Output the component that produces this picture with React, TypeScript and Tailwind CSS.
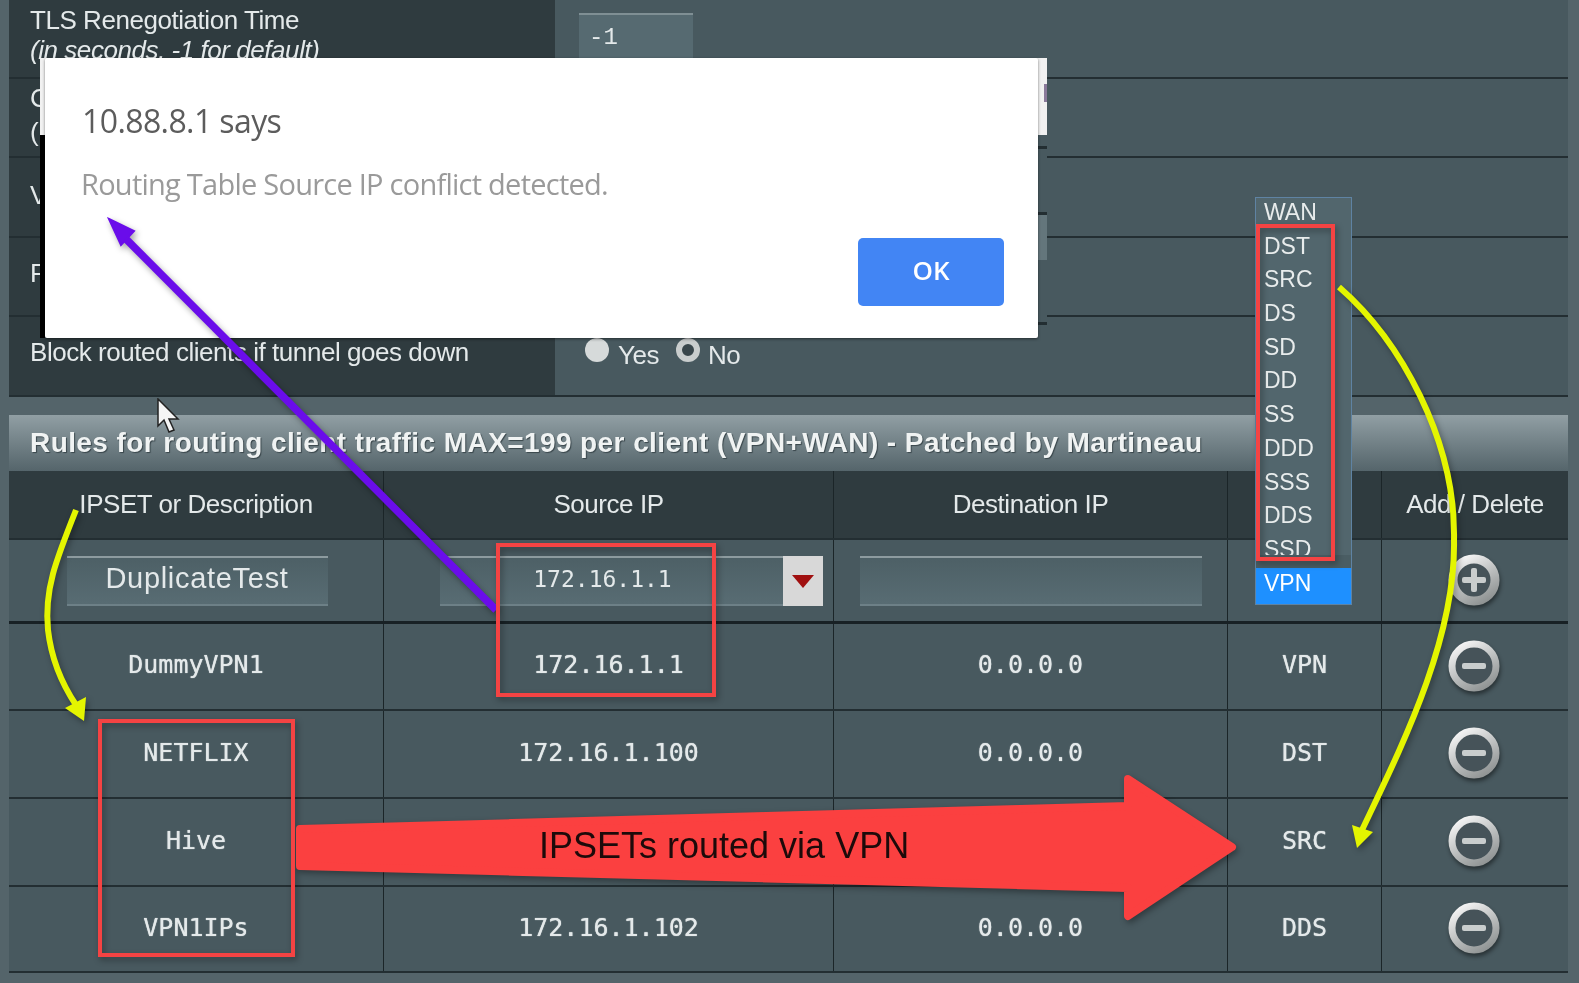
const columns = "grid grid-cols-[375px_450px_394px_154px_186px]";
const cell = "flex items-center justify-center border-r border-[#1b2528] last:border-r-0";
const mono = "font-['DejaVu_Sans_Mono',monospace] text-[25px] text-[#e4e9ea] [text-shadow:0_0_1px_#e4e9ea]";

const rules = [
  { name: "DummyVPN1", source: "172.16.1.1", dest: "0.0.0.0", iface: "VPN", height: "h-[87px]" },
  { name: "NETFLIX", source: "172.16.1.100", dest: "0.0.0.0", iface: "DST", height: "h-[88px]" },
  { name: "Hive", source: "", dest: "", iface: "SRC", height: "h-[88px]" },
  { name: "VPN1IPs", source: "172.16.1.102", dest: "0.0.0.0", iface: "DDS", height: "h-[86px]" },
];

const ifaceOptions = ["WAN", "DST", "SRC", "DS", "SD", "DD", "SS", "DDD", "SSS", "DDS", "SSD"];

function RoundButton({ plus = false }: { plus?: boolean }) {
  return (
    <svg width="56" height="56" viewBox="0 0 56 56" className="mb-[2px] mr-[2px] drop-shadow-[1px_3px_2px_rgba(0,0,0,0.45)]">
      <defs>
        <linearGradient id="ring" x1="0.2" y1="0" x2="0.8" y2="1">
          <stop offset="0" stopColor="#f4f4f4" />
          <stop offset="0.55" stopColor="#b9bcbc" />
          <stop offset="1" stopColor="#8f9393" />
        </linearGradient>
      </defs>
      <circle cx="28" cy="28" r={plus ? 21 : 22} fill="#465359" stroke="url(#ring)" strokeWidth={plus ? 9 : 7} />
      <rect x="16" y="25" width="24" height="6" rx="2" fill="#c9cdcd" />
      {plus && <rect x="25" y="16" width="6" height="24" rx="2" fill="#c9cdcd" />}
    </svg>
  );
}

function TextBox({ value, className }: { value: string; className: string }) {
  return (
    <input
      readOnly
      value={value}
      className={`h-[50px] border-t-2 border-b-2 border-t-[#8d9b9f] border-b-[#6d8087] bg-gradient-to-b from-[#4d6066] to-[#586c73] text-[#e4e9ea] outline-none ${className}`}
    />
  );
}

function SettingRow({ height, label, children }: { height: string; label?: React.ReactNode; children?: React.ReactNode }) {
  return (
    <div className={`flex ${height} border-b-2 border-[#232e32]`}>
      <div className="w-[546px] overflow-hidden bg-[#2f3b3f] pl-[21px] text-[26px] leading-[30px] tracking-[-0.45px] text-[#e4e9ea]">{label}</div>
      <div className="flex-1 bg-[#48595f]">{children}</div>
    </div>
  );
}

export default function App() {
  return (
    <div className="relative h-[983px] w-[1579px] overflow-hidden bg-[#54646a] font-['Liberation_Sans',sans-serif] blur-[0.6px]">
      <div className="ml-[9px] mr-[11px]">
        {/* OpenVPN settings, scrolled */}
        <SettingRow
          height="h-[79px]"
          label={
            <div className="pt-[5px]">
              <div>TLS Renegotiation Time</div>
              <div className="italic">(in seconds, -1 for default)</div>
            </div>
          }
        >
          <div className="ml-[24px] mt-[13px] h-[64px] w-[114px] border-t-2 border-[#7f8f94] bg-[#566a71] pl-[10px] pt-[5px] font-['Liberation_Mono',monospace] text-[24px] text-[#e4e9ea]">
            -1
          </div>
        </SettingRow>
        <SettingRow
          height="h-[79px]"
          label={
            <div className="pt-[2px] leading-[34px]">
              <div>C</div>
              <div>(</div>
            </div>
          }
        />
        <SettingRow height="h-[80px]" label={<div className="pt-[22px]">V</div>} />
        <SettingRow height="h-[79px]" label={<div className="pt-[20px]">F</div>} />
        <SettingRow height="h-[80px]" label={<div className="pt-[20px]">Block routed clients if tunnel goes down</div>}>
          <div className="flex items-center pl-[30px] pt-[13px] text-[26px] tracking-[-0.45px] text-[#e4e9ea]">
            <span className="mb-[6px] h-6 w-6 rounded-full bg-[#d6dada]" />
            <span className="ml-[9px] mt-[6px] w-[58px]">Yes</span>
            <span className="mb-[6px] h-6 w-6 rounded-full border-[6px] border-[#c9cdcd] bg-[#39464b]" />
            <span className="ml-[8px] mt-[6px]">No</span>
          </div>
        </SettingRow>

        {/* Rules table */}
        <div className="mt-[18px] flex h-[56px] items-center bg-gradient-to-b from-[#919fa4] to-[#55656b] pl-[21px] text-[28px] font-bold tracking-[0.42px] text-[#f0f3f3] [text-shadow:1px_1px_1px_#39464b]">
          Rules for routing client traffic MAX=199 per client (VPN+WAN) - Patched by Martineau
        </div>
        <div className={`${columns} h-[69px] border-b-2 border-[#232e32] bg-[#2f3b3f] text-[26px] tracking-[-0.45px] text-[#e4e9ea]`}>
          <div className={cell}>IPSET or Description</div>
          <div className={cell}>Source IP</div>
          <div className={cell}>Destination IP</div>
          <div className={cell} />
          <div className={cell}>Add / Delete</div>
        </div>
        <div className={`${columns} h-[84px] border-b-[3px] border-[#182125] bg-[#48595f]`}>
          <div className={cell}>
            <TextBox value="DuplicateTest" className="ml-[2px] w-[261px] pb-[4px] text-center text-[29px] tracking-[0.7px]" />
          </div>
          <div className={`${cell} justify-start! pl-[56px]`}>
            <TextBox value="172.16.1.1" className="w-[343px] pb-[4px] pr-[18px] text-center font-['DejaVu_Sans_Mono',monospace] text-[23px]" />
            <div className="flex h-[50px] w-[40px] items-center justify-center bg-[#d8d8d8]">
              <svg width="22" height="14" viewBox="0 0 22 14">
                <path d="M0 1 H22 L11 14 Z" fill="#a01010" />
              </svg>
            </div>
          </div>
          <div className={cell}>
            <TextBox value="" className="ml-[1px] w-[342px]" />
          </div>
          <div className={cell} />
          <div className={cell}>
            <RoundButton plus />
          </div>
        </div>
        {rules.map((rule) => (
          <div key={rule.name} className={`${columns} ${rule.height} border-b-2 border-[#232e32] bg-[#48595f] ${mono}`}>
            <div className={`${cell} pb-[3px]`}>{rule.name}</div>
            <div className={`${cell} pb-[3px]`}>{rule.source}</div>
            <div className={`${cell} pb-[3px]`}>{rule.dest}</div>
            <div className={`${cell} pb-[3px]`}>{rule.iface}</div>
            <div className={cell}>
              <RoundButton />
            </div>
          </div>
        ))}
      </div>

      {/* Open interface list */}
      <div className="absolute left-[1255px] top-[197px] h-[408px] w-[97px] overflow-hidden border border-[#5f83a3] bg-[#52666d] text-[23px] leading-[33.7px] text-[#e8ecec]">
        <div className="-mt-[2px]">
          {ifaceOptions.map((option) => (
            <div key={option} className="h-[33.7px] pl-[8px]">
              {option}
            </div>
          ))}
        </div>
        <div className="absolute bottom-[36px] left-0 h-[13px] w-full bg-[#4a5d63]" />
        <div className="absolute bottom-0 left-0 h-[36px] w-full bg-[#1e90ff] pl-[8px] leading-[30px] text-white">VPN</div>
      </div>

      {/* Alert dialog and what the capture left around it */}
      <div className="absolute left-[40px] top-[58px] h-[77px] w-[1007px] bg-[#f1f1f1]" />
      <div className="absolute left-[1044px] top-[84px] h-[18px] w-[3px] bg-[#8a7a9a]" />
      <div className="absolute left-[40px] top-[135px] h-[203px] w-[5px] bg-black" />
      <div className="absolute left-[1038px] top-[135px] flex h-[203px] w-[9px] flex-col bg-[#48595f]">
        <div className="mt-[11px] h-[3px] bg-[#232e32]" />
        <div className="mt-[63px] h-[3px] bg-[#232e32]" />
        <div className="h-[45px] bg-[#64767c]" />
        <div className="mt-[62px] h-[3px] bg-[#232e32]" />
      </div>
      <div className="absolute left-[45px] top-[58px] h-[280px] w-[993px] rounded-[2px] bg-white shadow-[0_1px_3px_rgba(0,0,0,0.5)]">
        <div className="pl-[37px] pt-[41px] font-['Open_Sans',sans-serif] text-[32px] leading-[44px] tracking-[-0.6px] text-[#5c5c5c]">10.88.8.1 says</div>
        <div className="pl-[36px] pt-[21px] font-['Open_Sans',sans-serif] text-[29px] leading-[40px] tracking-[-0.75px] text-[#9a9a9a]">
          Routing Table Source IP conflict detected.
        </div>
        <div className="absolute left-[813px] top-[180px] flex h-[68px] w-[146px] items-center justify-center rounded-[5px] bg-[#4285f4] pb-[3px] font-['Open_Sans',sans-serif] text-[26px] font-semibold text-white">
          OK
        </div>
      </div>

      {/* Annotations */}
      <svg className="absolute inset-0 drop-shadow-[2px_3px_3px_rgba(0,0,0,0.35)]" width="1579" height="983" viewBox="0 0 1579 983" fill="none">
        <path d="M496 610 L122 235" stroke="#6a0dea" strokeWidth="7.5" />
        <path d="M109 219 L134 231 L121 245 Z" fill="#6a0dea" stroke="#6a0dea" strokeWidth="2" />
        <path d="M76 510 C56 560 44 590 48 630 C52 665 66 690 76 705" stroke="#e4f500" strokeWidth="6" />
        <path d="M84 721 L65 708 L86 697 Z" fill="#e4f500" />
        <path d="M1339 287 C1400 340 1456 440 1454 540 C1456 640 1400 750 1362 830" stroke="#e4f500" strokeWidth="6" />
        <path d="M1357 848 L1352 825 L1373 832 Z" fill="#e4f500" />
        <path
          d="M300 829 L1128 806 L1128 779 L1232 847 L1128 916 L1128 888 L300 866 Z"
          fill="#fb4040"
          stroke="#fb4040"
          strokeWidth="8"
          strokeLinejoin="round"
        />
        <rect x="1258" y="226" width="75" height="333" stroke="#f44343" strokeWidth="4" />
        <rect x="498" y="545" width="216" height="150" stroke="#f44343" strokeWidth="4" />
        <rect x="100" y="721" width="193" height="234" stroke="#f44343" strokeWidth="4" />
      </svg>
      <div className="absolute left-[539px] top-[825px] text-[36px] leading-[42px] text-[#1d0a0a]">IPSETs routed via VPN</div>

      {/* Mouse pointer */}
      <svg className="absolute left-[156px] top-[398px]" width="24" height="36" viewBox="0 0 24 36">
        <path d="M2 1 L2 28 L8 22 L13 34 L18 32 L13 21 L22 21 Z" fill="#f5f5f5" stroke="#222" strokeWidth="1.5" />
      </svg>
    </div>
  );
}
